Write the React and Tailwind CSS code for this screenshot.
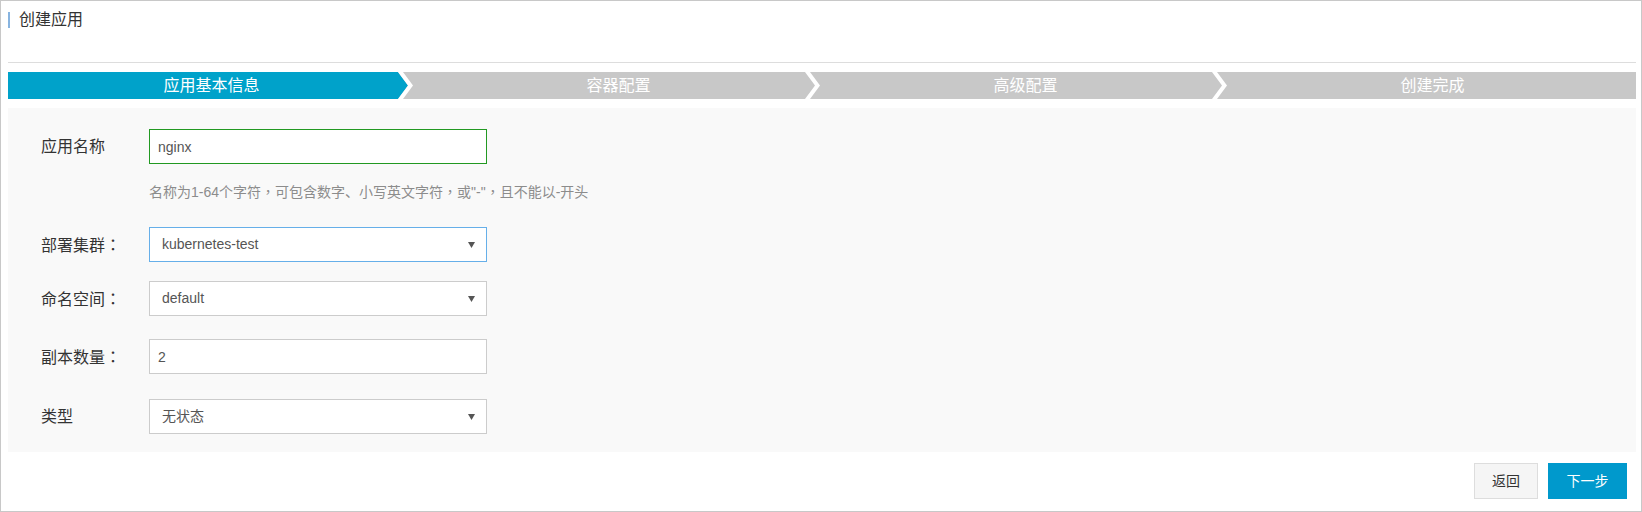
import React from 'react'
import clsx from 'clsx'

const steps = ['应用基本信息', '容器配置', '高级配置', '创建完成']

// centred full-width punctuation, as in the reference
const P = ({ children }) => <span className="font-['Noto_Sans_CJK_TC',sans-serif]">{children}</span>

const Arrow = () => (
  <svg width="7" height="6" viewBox="0 0 7 6" className="shrink-0">
    <polygon points="0,0 7,0 3.5,6" fill="#555" />
  </svg>
)

// select look-alike
const Select = ({ value, focus }) => (
  <div
    className={clsx(
      'flex h-[35px] w-[338px] items-center justify-between border bg-white pl-[12px] pr-[11px] text-[14px] text-[#555]',
      focus ? 'border-[#66afe9]' : 'border-[#cccccc]'
    )}
  >
    <span>{value}</span>
    <Arrow />
  </div>
)

const Field = ({ value, ok }) => (
  <input
    readOnly
    value={value}
    className={clsx(
      'h-[35px] w-[338px] border bg-white pl-[8px] text-[14px] text-[#555] outline-none',
      ok ? 'border-[#229922]' : 'border-[#cccccc]'
    )}
  />
)

const Row = ({ label, colon, children, className }) => (
  <div className={clsx('flex items-center', className)}>
    <div className="w-[108px] text-[16px] leading-none text-[#333]">
      {label}
      {colon && <P>：</P>}
    </div>
    {children}
  </div>
)

const App = () => {
  return (
    <div className="h-[512px] w-[1642px] border border-[#c8c8c8] bg-white pt-[10px] pl-[7px] pr-[5px] font-['Liberation_Sans','Noto_Sans_CJK_SC',sans-serif]">
      {/* header */}
      <div className="flex h-[17px] items-center">
        <div className="h-[16px] w-[2px] bg-[#88b4e0]" />
        <div className="ml-[9px] text-[16px] leading-none text-[#333]">创建应用</div>
      </div>
      <div className="mt-[34px] h-px bg-[#dddddd]" />

      {/* steps */}
      <div className="mt-[9px] flex h-[27px] bg-[#c8c8c8]">
        {steps.map((s, i) => (
          <div
            key={s}
            className={clsx(
              'relative flex flex-1 items-center justify-center text-[16px] text-white',
              i === 0 ? 'bg-[#00a2ca]' : 'bg-[#c8c8c8]'
            )}
          >
            {s}
            {i < steps.length - 1 && (
              <svg className="absolute right-0 top-0" width="19" height="27" viewBox="0 0 19 27">
                <rect width="19" height="27" fill="#c8c8c8" />
                <polygon points="0,0 2,0 12,13.5 2,27 0,27" fill={i === 0 ? '#00a2ca' : '#c8c8c8'} />
                <polygon points="2,0 7,0 17,13.5 7,27 2,27 12,13.5" fill="#fff" />
              </svg>
            )}
          </div>
        ))}
      </div>

      {/* form */}
      <div className="mt-[9px] h-[344px] bg-[#f9f9f9] pt-[21px] pl-[33px]">
        <Row label="应用名称">
          <Field value="nginx" ok />
        </Row>
        <div className="mt-[17px] pl-[108px] text-[14px] leading-[20px] text-[#8c8c8c]">
          名称为1-64个字符<P>，</P>可包含数字、小写英文字符<P>，</P>或"-"<P>，</P>且不能以-开头
        </div>
        <Row label="部署集群" colon className="mt-[25px]">
          <Select value="kubernetes-test" focus />
        </Row>
        <Row label="命名空间" colon className="mt-[19px]">
          <Select value="default" />
        </Row>
        <Row label="副本数量" colon className="mt-[23px]">
          <Field value="2" />
        </Row>
        <Row label="类型" className="mt-[25px]">
          <Select value="无状态" />
        </Row>
      </div>

      {/* buttons */}
      <div className="mt-[11px] flex justify-end gap-[10px] pr-[9px]">
        <button className="h-[36px] w-[64px] border border-[#dddddd] bg-[#f5f5f5] text-[14px] text-[#333]">
          返回
        </button>
        <button className="h-[36px] w-[79px] bg-[#0099cc] text-[14px] text-white">下一步</button>
      </div>
    </div>
  )
}

export default App
